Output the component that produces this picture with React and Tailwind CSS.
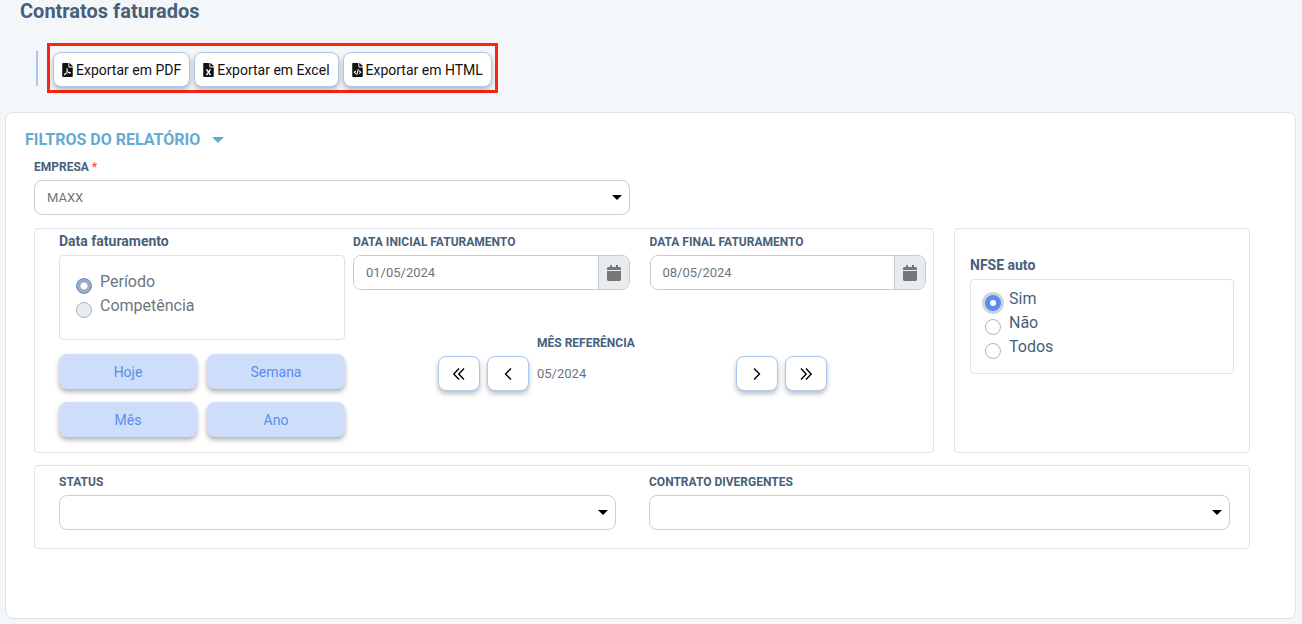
import { FaFilePdf, FaFileExcel, FaFileCode, FaCalendar } from "react-icons/fa";

const EXPORTS = [
  { label: "Exportar em PDF", Icon: FaFilePdf },
  { label: "Exportar em Excel", Icon: FaFileExcel },
  { label: "Exportar em HTML", Icon: FaFileCode },
];

const LABEL = "block text-xs leading-4 font-bold text-[#475f7b]";
const HEADING = "text-sm leading-5 font-bold text-[#475f7b]";
const PANEL = "rounded border border-[#dee2e6]";

function Caret({ className }) {
  return (
    <svg viewBox="0 0 10 5" className={className} aria-hidden="true">
      <path d="M0 0h10L5 5z" fill="currentColor" />
    </svg>
  );
}

function Select({ id, label, required, options }) {
  return (
    <div>
      <label htmlFor={id} className={LABEL}>
        {label}
        {required && <span className="text-[#f05050]"> *</span>}
      </label>
      <div className="mt-[5px] grid items-center">
        <select
          id={id}
          className="col-start-1 row-start-1 h-[35px] w-full appearance-none rounded-lg border border-[#c9ced6] bg-white px-3 text-[13px] text-[#6c757d]"
        >
          {options.map((option) => (
            <option key={option}>{option}</option>
          ))}
        </select>
        <Caret className="pointer-events-none col-start-1 row-start-1 mr-2 h-[5px] w-2.5 justify-self-end text-black" />
      </div>
    </div>
  );
}

function DateField({ id, label, value }) {
  return (
    <div>
      <label htmlFor={id} className={LABEL}>
        {label}
      </label>
      <div className="mt-[5px] flex h-[35px] overflow-hidden rounded-lg border border-[#c3cad3]">
        <input
          id={id}
          type="text"
          defaultValue={value}
          className="min-w-0 flex-1 bg-white px-3 text-[13px] text-[#6c757d]"
        />
        <button
          type="button"
          aria-label="Abrir calendário"
          className="flex w-[31px] items-center justify-center border-l border-[#c3cad3] bg-[#e9ecef] text-[#777]"
        >
          <FaCalendar size={16} />
        </button>
      </div>
    </div>
  );
}

function Radio({ name, label, defaultChecked, disabled, focused }) {
  return (
    <label className="flex h-6 gap-2">
      <input
        type="radio"
        name={name}
        defaultChecked={defaultChecked}
        disabled={disabled}
        className={
          "mt-2 size-4 shrink-0 appearance-none rounded-full border border-[#adb5bd] bg-white checked:border-[5px] checked:border-[#5a8dee] disabled:bg-[#e9ecef] disabled:checked:border disabled:checked:border-[#5a8dee] disabled:checked:bg-[radial-gradient(circle,#fff_3px,#9fabb9_4px)] " +
          (focused ? "ring-3 ring-[#ced4da]" : "")
        }
      />
      <span className={disabled ? "text-base leading-6 text-[#6c757d]" : "text-base leading-6 text-[#475f7b]"}>
        {label}
      </span>
    </label>
  );
}

function RangeButton({ children }) {
  return (
    <button
      type="button"
      className="h-[35px] rounded-lg bg-[#cdddfa] text-sm text-[#5a8dee] shadow-[0_3px_5px_rgba(0,0,0,0.3)]"
    >
      {children}
    </button>
  );
}

function StepButton({ label, d }) {
  return (
    <button
      type="button"
      aria-label={label}
      className="flex h-[35px] w-[42px] shrink-0 items-center justify-center rounded-lg border border-[#a9c8ee] bg-white text-black shadow-[0_3px_5px_rgba(0,0,0,0.25)]"
    >
      <svg viewBox="0 0 14 14" className="size-3.5" fill="none" stroke="currentColor" strokeWidth="1.4" aria-hidden="true">
        <path d={d} />
      </svg>
    </button>
  );
}

export default function App() {
  return (
    <div className="min-h-screen bg-[#f3f7fa] pr-1.5 pb-[5px] pl-[5px] font-[Roboto,sans-serif]">
      <header className="pl-[15px]">
        <h1 className="text-xl leading-[22px] font-bold text-[#475f7b]">Contratos faturados</h1>
        <div className="mt-[21px] ml-4 flex items-center gap-[9px]">
          <div className="h-[35px] w-0.5 bg-[#a9c8ee]" />
          <div className="flex gap-1 border-3 border-[#fb2412] px-[3px] pt-1.5 pb-[3px]">
            {EXPORTS.map(({ label, Icon }) => (
              <button
                key={label}
                type="button"
                className="flex h-[35px] items-center gap-[3px] rounded-lg border border-[#a9c8ee] bg-white px-2 text-sm whitespace-nowrap text-[#111] shadow-[0_3px_5px_rgba(0,0,0,0.25)]"
              >
                <Icon size={14} className="w-[11px]" />
                {label}
              </button>
            ))}
          </div>
        </div>
      </header>

      <main className="mt-[19px] rounded-lg border border-[#dee2e6] bg-white pr-[45px] pb-[69px] pl-7">
        <button type="button" className="mt-[17px] -ml-[9px] flex items-center gap-3 text-base leading-5 font-bold text-[#64aad3]">
          FILTROS DO RELATÓRIO
          <Caret className="h-1.5 w-3" />
        </button>

        <div className="mt-[9px] w-[49%]">
          <Select id="empresa" label="EMPRESA" required options={["MAXX"]} />
        </div>

        <div className="mt-[13px] grid grid-cols-[900fr_296fr] gap-5">
          <section className={PANEL + " grid grid-cols-[286fr_573fr] gap-2 pt-0.5 pr-[7px] pb-[15px] pl-6"}>
            <div>
              <h2 className={HEADING}>Data faturamento</h2>
              <div className={PANEL + " mt-1 h-[85px] px-4 pt-3.5"}>
                <Radio name="tipo" label="Período" defaultChecked disabled />
                <Radio name="tipo" label="Competência" disabled />
              </div>
              <div className="mt-3.5 grid grid-cols-2 gap-x-2.5 gap-y-[13px]">
                <RangeButton>Hoje</RangeButton>
                <RangeButton>Semana</RangeButton>
                <RangeButton>Mês</RangeButton>
                <RangeButton>Ano</RangeButton>
              </div>
            </div>
            <div className="pt-[3px]">
              <div className="grid grid-cols-2 gap-5">
                <DateField id="inicio" label="DATA INICIAL FATURAMENTO" value="01/05/2024" />
                <DateField id="fim" label="DATA FINAL FATURAMENTO" value="08/05/2024" />
              </div>
              <div className="mt-[45px] flex items-end gap-[7px] pr-[99px] pl-[85px]">
                <StepButton label="Ano anterior" d="M7 1.5L1.8 7L7 12.5M12 1.5L6.8 7L12 12.5" />
                <StepButton label="Mês anterior" d="M10 1.5L4.5 7L10 12.5" />
                <div className="min-w-0 flex-1 pl-px">
                  <label htmlFor="referencia" className={LABEL}>
                    MÊS REFERÊNCIA
                  </label>
                  <input
                    id="referencia"
                    type="text"
                    defaultValue="05/2024"
                    className="mt-[5px] block h-[35px] w-full bg-transparent text-[13px] text-[#6c757d]"
                  />
                </div>
                <StepButton label="Próximo mês" d="M4 1.5L9.5 7L4 12.5" />
                <StepButton label="Próximo ano" d="M2 1.5L7.2 7L2 12.5M7 1.5L12.2 7L7 12.5" />
              </div>
            </div>
          </section>

          <section className={PANEL + " px-[15px] pt-[26px]"}>
            <h2 className={HEADING}>NFSE auto</h2>
            <div className={PANEL + " mt-1 h-[95px] px-3.5 pt-[7px]"}>
              <Radio name="nfse" label="Sim" defaultChecked focused />
              <Radio name="nfse" label="Não" />
              <Radio name="nfse" label="Todos" />
            </div>
          </section>
        </div>

        <section className={PANEL + " mt-3 grid grid-cols-[557fr_581fr] gap-[33px] pt-2 pr-[19px] pb-[18px] pl-6"}>
          <Select id="status" label="STATUS" options={[""]} />
          <Select id="divergentes" label="CONTRATO DIVERGENTES" options={[""]} />
        </section>
      </main>
    </div>
  );
}
